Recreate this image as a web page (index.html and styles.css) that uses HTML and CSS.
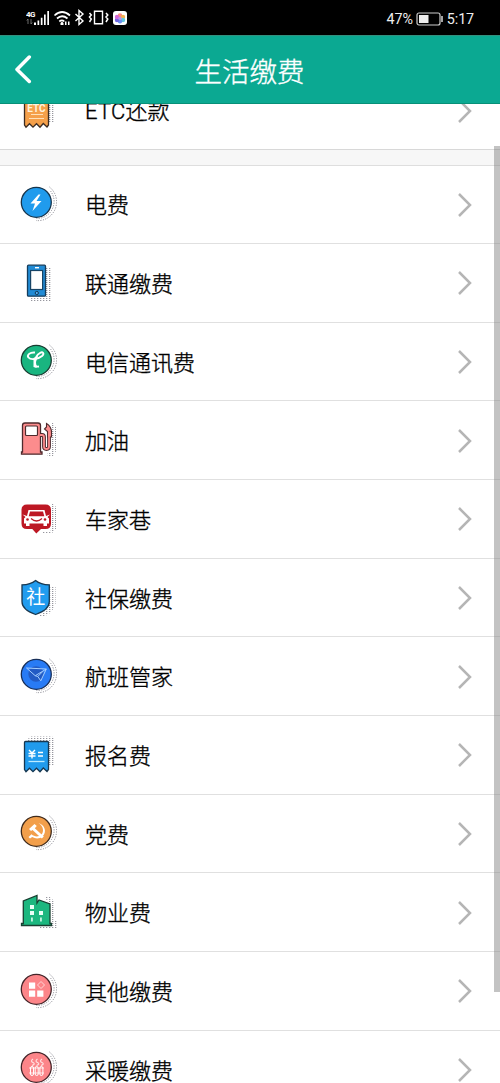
FILE: index.html
```html
<!DOCTYPE html>
<html lang="zh-CN">
<head>
<meta charset="utf-8">
<title>生活缴费</title>
<link rel="stylesheet" href="styles.css">
</head>
<body>
<svg class="defs" width="0" height="0" aria-hidden="true">
  <defs>
    <pattern id="dots" width="3" height="2" patternUnits="userSpaceOnUse"><rect width="1.3" height="1" fill="#96969e"/></pattern>
    <symbol id="chevron" viewBox="0 0 16 26"><path d="M2 2 L13 13 L2 24" fill="none" stroke="#b5b5b5" stroke-width="2.5"/></symbol>
    <g id="halo" fill="none" stroke="#85858e" stroke-width="1" stroke-dasharray="1.1 1.4">
      <path d="M33.500 6A19 19 0 0 1 40.500 22A18.500 18.500 0 0 1 20 39.500"/>
      <path d="M34.500 10A17 17 0 0 1 38 22A17 17 0 0 1 20.500 37.500"/>
    </g>
  </defs>
</svg>

<div class="status">
  <svg class="signals" viewBox="0 0 108 20" width="108" height="20">
    <text x="0" y="7.500" class="net">4G</text>
    <path d="M2 10v5M.8 11.500L2 10M5 10v5M6.200 13.500L5 15" stroke="#888" stroke-width=".8" fill="none"/>
    <g fill="#fff"><path d="M8 13.500h2V16H8zM11.500 11.500h1.700V16h-1.700zM14.800 8.800h1.700V16h-1.700zM18 5.500h1.700V16H18zM21.300 2h1.700v14h-1.700z"/></g>
    <g fill="none" stroke="#fff" stroke-width="1.700">
      <path d="M28.500 6.500q7.500-7 15.500 0M31 9.500q5-4.500 10.500 0M33.300 12.500q2.700-2.300 5 0"/>
      <path d="M49.500 5l7.500 7-4 3.500V1.500l4 3.500-7.500 7" stroke-width="1.400"/>
      <path d="M68.500 2.200h8v12.600h-8z" stroke-width="1.400"/>
      <path d="M63.500 4l1.800 2-1.800 2 1.800 2-1.800 3M80 4l1.800 2L80 8l1.800 2L80 13" stroke-width="1.500"/>
    </g>
    <path d="M34.500 14l1.500-1.500 1.500 1.500v2h-3zM39 12.500h1.500V16H39zM42 12.500h1.500V16H42z" fill="#fff"/>
    <rect x="87" y="2" width="14" height="14" rx="3" fill="#fff"/>
    <g><circle cx="94" cy="6.500" r="2.300" fill="#fa8b80"/><circle cx="97" cy="8" r="2.200" fill="#f4b14e"/><circle cx="97" cy="11" r="2.200" fill="#60c9df"/><circle cx="94" cy="12.300" r="2.200" fill="#6b8ff0"/><circle cx="91" cy="11" r="2.200" fill="#6e65e2"/><circle cx="91" cy="8" r="2.200" fill="#d367d5"/><circle cx="94" cy="9.400" r="1.700" fill="#b594e8"/></g>
  </svg>
  <div class="power">
    <span>47%</span>
    <svg viewBox="0 0 28 14" width="28" height="14"><rect x="1" y="1" width="23" height="12" rx="2" fill="none" stroke="#ccc" stroke-width="1.200"/><rect x="3" y="3" width="9.500" height="8" fill="#eee"/><path d="M26 4v6" stroke="#ccc" stroke-width="1.600"/></svg>
    <span>5:17</span>
  </div>
</div>

<header class="bar">
  <svg class="back" viewBox="0 0 18 30" width="18" height="30"><path d="M15.300 2L3 14.500l12.300 12" fill="none" stroke="#fff" stroke-width="3.500" stroke-linecap="round" stroke-linejoin="round"/></svg>
  <h1>生活缴费</h1>
</header>

<main class="view">
  <ul class="list lead">
    <li class="row">
      <svg class="icon" viewBox="0 0 48 48"><path d="M14 6h24v29h-5V10H14z" fill="url(#dots)"/><path d="M8.500 38V10h24v28l-1.500 2-3.700-3.500-3.300 3.700-3.500-3.500-3.500 3.500-3.500-3.500-3.500 3.500z" fill="#f5a04a" stroke="#3b2b22" stroke-width="1.300"/><text x="20.500" y="24.500" class="etc">ETC</text><path d="M15 27.500h12M13 31.500h15" stroke="#ffe1b9"/></svg>
      <span class="name"><span class="latin">ETC</span>还款</span><svg class="go"><use href="#chevron"/></svg>
    </li>
  </ul>
  <ul class="list">
    <li class="row">
      <svg class="icon" viewBox="0 0 48 48"><use href="#halo"/><circle cx="20.300" cy="21.300" r="15" fill="#209bed" stroke="#17344b" stroke-width="1.300"/><path d="M22.500 13.500l-8 9h4.500l-2.500 7.500 9-10h-5l4-6.500z" fill="#fff"/></svg>
      <span class="name">电费</span><svg class="go"><use href="#chevron"/></svg>
    </li>
    <li class="row">
      <svg class="icon" viewBox="0 0 48 48"><path d="M30 8h5v33H15v-4h15z" fill="url(#dots)"/><rect x="11.500" y="5.200" width="18" height="31" rx="1" fill="#218bd5" stroke="#153c5b" stroke-width="1.300"/><rect x="14.600" y="10.500" width="12" height="19" fill="#fff" stroke="#164466" stroke-width="1.200"/><path d="M19 7.700h4" stroke="#fff" stroke-width="1.400"/><circle cx="20.800" cy="33" r="1.600" fill="#5baced" stroke="#133954"/></svg>
      <span class="name">联通缴费</span><svg class="go"><use href="#chevron"/></svg>
    </li>
    <li class="row">
      <svg class="icon" viewBox="0 0 48 48"><use href="#halo"/><circle cx="20.300" cy="21.300" r="15" fill="#19b580" stroke="#193c31" stroke-width="1.300"/><path d="M19 13.500C14 13 10.500 16 12.500 18.500c2.500 3 10 1.500 13.500-1.500 3-3 .5-4.500-2-3-3.500 2-5 6-5 9.500 0 3.500.5 4.500 4 4" fill="none" stroke="#fff" stroke-width="1.900"/><path d="M17.500 19l4.500-2.500-2 6.500.5 6-3-1z" fill="#fff"/></svg>
      <span class="name">电信通讯费</span><svg class="go"><use href="#chevron"/></svg>
    </li>
    <li class="row">
      <svg class="icon" viewBox="0 0 48 48"><path d="M36 6h1l3 4v24l-3 5h-6v-3h4z" fill="url(#dots)"/><path d="M6.500 35V8.500q0-2.500 2.500-2.500h13q2.500 0 2.500 2.500V35h1.500v2.200H5.500V35z" fill="#fc8c8d" stroke="#4e2a2d" stroke-width="1.300"/><rect x="9.500" y="9" width="12" height="9.500" rx="1" fill="#fff" stroke="#4e2a2d" stroke-width="1.200"/><path d="M25 18h1q2 0 2 2v9.500q0 2.500 2.500 2.500t2.500-2.500V16" fill="none" stroke="#4e2a2d" stroke-width="3.800"/><path d="M30.500 6.500q5 3 5 9V20h-4v-5.500l-3-2.500 2-2z" fill="#fc8c8d" stroke="#4e2a2d" stroke-width="1.100"/><path d="M24 18h2q2 0 2 2v9.500q0 2.500 2.500 2.500t2.500-2.500V18" fill="none" stroke="#fc8c8d" stroke-width="1.800"/></svg>
      <span class="name">加油</span><svg class="go"><use href="#chevron"/></svg>
    </li>
    <li class="row">
      <svg class="icon" viewBox="0 0 48 48"><path d="M36 7l4 4v22l-5 5h-8v-3h7l1-4z" fill="url(#dots)"/><path d="M11 8.500h18.500q5.500 0 5.500 5.500v13.500q0 5.500-5.500 5.500H25L20.300 37.500l-4-4.500H11q-5.500 0-5.500-5.500V14Q5.500 8.500 11 8.500z" fill="#bd1824"/><path d="M12.500 14h16l1.500 6 4-1.500-2.500 2.500 1.500 1.500v5H31V30h-3.500v-2.500h-14V30H10v-2.500H8v-5L9.500 21 6.500 18.500 11 20zM14 15.500l-1.300 4.700h15.600L27 15.500z" fill="#fff" fill-rule="evenodd"/><circle cx="11.500" cy="23.500" r="1.300" fill="#bd1824"/><circle cx="29" cy="23.500" r="1.300" fill="#bd1824"/><path d="M15 22.500q5.500 5 11 0" stroke="#bd1824" stroke-width="1.200" fill="none"/></svg>
      <span class="name">车家巷</span><svg class="go"><use href="#chevron"/></svg>
    </li>
    <li class="row">
      <svg class="icon" viewBox="0 0 48 48"><path d="M33 11h6.500v18l-4 8-7 4.500h-6L32 33z" fill="url(#dots)"/><path d="M19.600 5.500q5 4.300 13.700 4.300v17q0 8-13.700 12.700Q6 34.800 6 26.800v-17Q14.600 9.800 19.600 5.500z" fill="#219cef" stroke="#183851" stroke-width="1.300"/><text x="19.700" y="29" class="she">社</text></svg>
      <span class="name">社保缴费</span><svg class="go"><use href="#chevron"/></svg>
    </li>
    <li class="row">
      <svg class="icon" viewBox="0 0 48 48"><use href="#halo"/><circle cx="20.300" cy="21.300" r="15" fill="#287bf5" stroke="#182f58" stroke-width="1.300"/><circle cx="20" cy="21" r="7.700" fill="#225bc4"/><path d="M10.500 15l19.800 1-5.500 11.800-3-4.300-2.600-.8zM30.300 16l-11 6.700M21.800 23.500l5-5" fill="none" stroke="#a4ceff" stroke-width="1"/></svg>
      <span class="name">航班管家</span><svg class="go"><use href="#chevron"/></svg>
    </li>
    <li class="row">
      <svg class="icon" viewBox="0 0 48 48"><path d="M14 4.500h22l2 2V34h-5V9H12V7z" fill="url(#dots)"/><path d="M8.500 37.500V10.500q0-1 1-1h22q1 0 1 1v27l-1.500 2-3.700-3.500-3.300 3.700-3.500-3.500-3.500 3.500-3.500-3.500-3.500 3.500z" fill="#209bed" stroke="#173750" stroke-width="1.300"/><path d="M13 18l3 3 3-3M12.500 21.500h7M12.500 24h7M16 21v5.500M22 20.500h5M22 24h5" fill="none" stroke="#fff" stroke-width="1.400"/><path d="M12.500 29.500h16" stroke="#bcecff" stroke-width="1.300"/></svg>
      <span class="name">报名费</span><svg class="go"><use href="#chevron"/></svg>
    </li>
    <li class="row">
      <svg class="icon" viewBox="0 0 48 48"><use href="#halo"/><circle cx="20.300" cy="21.300" r="15" fill="#f29f4b" stroke="#3f2b1d" stroke-width="1.300"/><path d="M22.500 13c5 3 6 9 2.500 12-3 2.300-7 1.500-9.500-.8L12.500 27l1.500 1.500 2.200-1.500c4 2.200 7.500 1.700 10.500-.8 4.500-4.500 2-11.200-4.200-13.200z" fill="#fff"/><path d="M13 19l5.500-5 2.300 2-2 2.200 9 8.300-2 2-9.300-8.500-1.500 1z" fill="#fff"/></svg>
      <span class="name">党费</span><svg class="go"><use href="#chevron"/></svg>
    </li>
    <li class="row">
      <svg class="icon" viewBox="0 0 48 48"><path d="M28 7h5l5 5v20h3v8H24v-4h12V16h-2z" fill="url(#dots)"/><path d="M7.300 34.500V12L21 6.500V14l2-3 11 4v19.500h1.500v2h-30v-2z" fill="#1cb77f" stroke="#193f31" stroke-width="1.300"/><path d="M14 16h4v4h-4zM14 22h4v4h-4zM23 22h4v4h-4zM15.200 28.500h1.500v4h-1.500zM24.200 28.500h1.500v4h-1.500z" fill="#eafff7"/></svg>
      <span class="name">物业费</span><svg class="go"><use href="#chevron"/></svg>
    </li>
    <li class="row">
      <svg class="icon" viewBox="0 0 48 48"><use href="#halo"/><circle cx="20.300" cy="21.300" r="15" fill="#fc8589" stroke="#432529" stroke-width="1.300"/><path d="M13 14.500h6.200v6.200H13zM13 22.500h6.200v6.200H13zM21.200 22.500h6.200v6.200h-6.200z" fill="#fff"/><path d="M25 13.500l3.500 3.500-3.500 3.500-3.500-3.500z" fill="none" stroke="#ffd5d5"/></svg>
      <span class="name">其他缴费</span><svg class="go"><use href="#chevron"/></svg>
    </li>
    <li class="row">
      <svg class="icon" viewBox="0 0 48 48"><use href="#halo"/><circle cx="20.300" cy="21.300" r="15" fill="#fc8589" stroke="#432529" stroke-width="1.300"/><path d="M17 13q-3 2 0 3.500t-1 3M21.500 13q-3 2 0 3.500t-1 3M26 13q-3 2 0 3.500t-1 3M13 22h15M13 27h15" fill="none" stroke="#ffe3e3" stroke-width="1.100"/><g fill="none" stroke="#fff"><rect x="14.500" y="20.500" width="3" height="9" rx="1.500"/><rect x="19.200" y="20.500" width="3" height="9" rx="1.500"/><rect x="23.900" y="20.500" width="3" height="9" rx="1.500"/></g></svg>
      <span class="name">采暖缴费</span><svg class="go"><use href="#chevron"/></svg>
    </li>
  </ul>
  <div class="scroll"></div>
</main>
</body>
</html>
```

FILE: styles.css
```css
* { box-sizing: border-box; }
body {
  margin: 0;
  height: 1083px;
  overflow: hidden;
  display: flex;
  flex-direction: column;
  background: #fff;
  color: #000;
  font-family: "Noto Sans CJK SC", sans-serif;
  font-weight: 300;
}
.defs { position: absolute; }
.status {
  flex: 0 0 35px;
  background: #000;
  color: #eee;
  display: flex;
  justify-content: space-between;
  align-items: center;
  padding: 2px 26px 0;
}
.net { font: bold 8px Roboto, sans-serif; fill: #fff; letter-spacing: -.6px; }
.power {
  display: flex;
  align-items: center;
  gap: 3px;
  font: 14.3px/20px Roboto, sans-serif;
}
.power span { letter-spacing: -.1px; }
.bar {
  flex: 0 0 69px;
  background: #0ba992;
  border-top: 1px solid #33917f;
  border-bottom: 1px solid #079078;
  color: #fff;
  display: grid;
  grid-template-columns: 60px 1fr 60px;
  align-items: center;
}
.back { margin-left: 14px; }
.bar h1 {
  margin: 0;
  padding-right: 1px;
  text-align: center;
  font-size: 27.5px;
  line-height: 40px;
  font-weight: 300;
  -webkit-text-stroke: .35px #fff;
}
.view {
  position: relative;
  flex: 1;
  min-height: 0;
  overflow: hidden;
}
.list { list-style: none; margin: 0; padding: 0; }
.lead {
  margin-top: -33px;
  border-bottom: 15px solid #f7f7f7;
  box-shadow: 0 1px 0 #dedede;
}
.lead + .list { padding-top: .4px; }
.row {
  height: 78.67px;
  display: flex;
  align-items: center;
  padding: 1px 26px 0 16px;
  border-bottom: 1px solid #e0e0e0;
}
.lead .row { height: 79px; border-color: #d8d8d8; }
.icon { width: 48px; height: 48px; flex: none; margin-top: 1px; }
.name {
  margin-left: 21px;
  flex: 1;
  font-size: 22px;
  line-height: 32px;
  padding-bottom: 2.6px;
  -webkit-text-stroke: .35px #000;
}
.lead .name { padding-bottom: 0; }
.latin { font-family: Roboto, sans-serif; letter-spacing: .2px; }
.go { width: 16px; height: 26px; margin-right: 1px; }
.etc { font: bold 10px Roboto, sans-serif; fill: #fff3dd; text-anchor: middle; }
.she { font: 400 19px "Noto Sans CJK SC", sans-serif; fill: #fff; text-anchor: middle; }
.scroll {
  position: absolute;
  top: 42px;
  right: 0;
  width: 6px;
  height: 846px;
  background: rgba(128, 128, 128, .47);
}
```
